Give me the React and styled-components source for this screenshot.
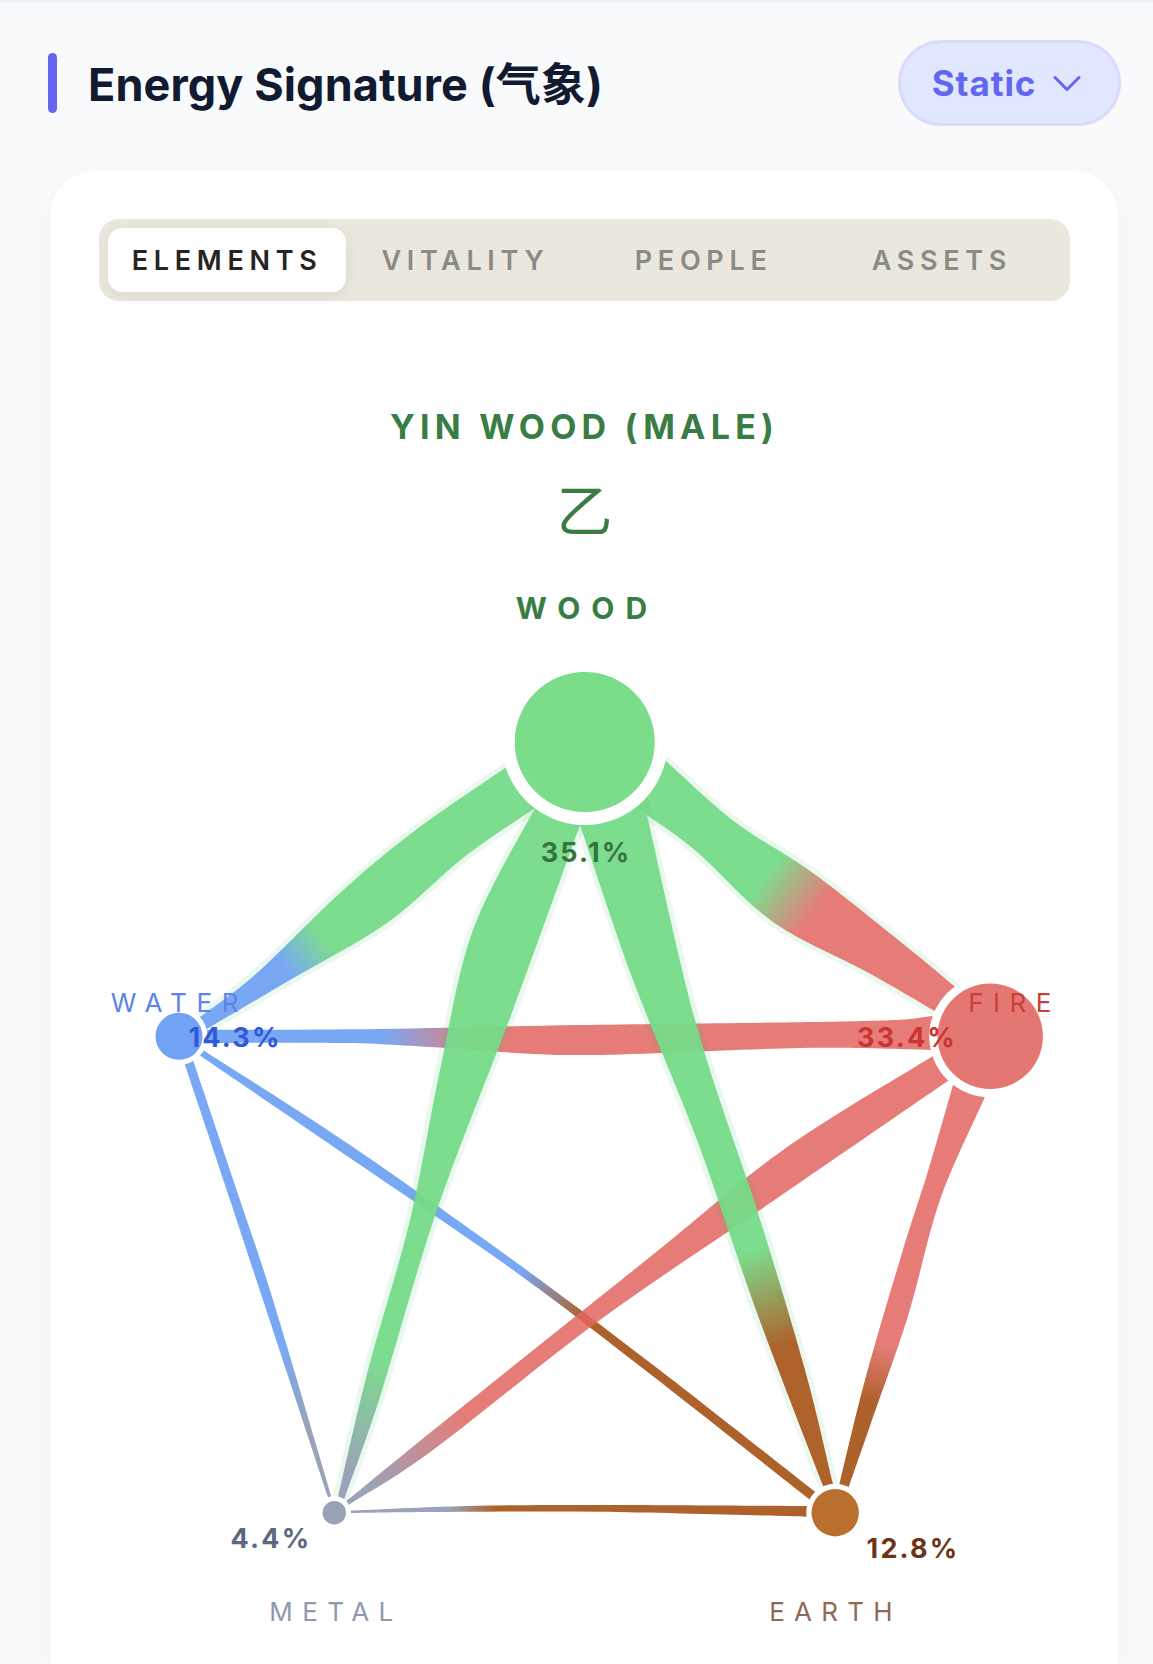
import React from "react";
import styled, { createGlobalStyle } from "styled-components";

const GlobalStyle = createGlobalStyle`
  html, body {
    margin: 0;
    height: 100%;
    overflow: hidden;
    background: #f8fafc;
    font-family: Inter, "Noto Sans CJK SC", sans-serif;
  }
`;

const TABS = ["ELEMENTS", "VITALITY", "PEOPLE", "ASSETS"];

const COLORS = {
  wood: "#66d77a",
  fire: "#e26560",
  water: "#6099f2",
  earth: "#9f4605",
  metal: "#8893ac",
};

// the wood ribbons are nearly opaque, so they need their own mix to look the same
const HALO_COLORS = {
  wood: "#76db88",
  fire: "#e57571",
  water: "#71a3f3",
  earth: "#a95a20",
  metal: "#959eb4",
};

const NODES = [
  { id: "wood", x: 584.7, y: 742, r: 70, ring: 83, fill: "#7bdc8a" },
  { id: "fire", x: 990.2, y: 1036.3, r: 52.7, ring: 61, fill: "#e57773" },
  { id: "water", x: 179, y: 1036.3, r: 23.5, ring: 28.5, fill: "#72a2f4" },
  { id: "metal", x: 334.3, y: 1512.7, r: 11.7, ring: 16.7, fill: "#99a3b8" },
  { id: "earth", x: 835.2, y: 1512.7, r: 23.7, ring: 29, fill: "#b9702f" },
];

const nodeById = (id) => NODES.find((n) => n.id === id);

// paint order matters, wood goes last because it lies over the other ribbons
const RIBBONS = [
  {
    from: "metal", to: "earth", stops: [0.23, 0.32],
    top: [[350, 1510.7], [466.7, 1506], [600, 1505], [806.7, 1506]],
    bottom: [[350, 1513], [433, 1512], [600, 1511.7], [806.7, 1516.7]],
  },
  {
    from: "water", to: "earth", stops: [0.51, 0.607],
    top: [[205.7, 1051.7], [350, 1145], [517, 1263], [657, 1368], [815, 1491.7]],
    bottom: [[201.7, 1056.7], [350, 1158], [513, 1270], [645, 1370], [809, 1499]],
  },
  {
    from: "water", to: "metal", stops: [0.64, 0.825],
    top: [[194, 1063], [240, 1200], [273, 1300], [331.7, 1497]],
    bottom: [[185, 1065], [230, 1200], [263, 1300], [328, 1497]],
  },
  {
    from: "water", to: "fire", stops: [0.25, 0.367],
    top: [[200, 1030], [380, 1029], [580, 1025], [867, 1021], [932, 1016]],
    bottom: [[200, 1043], [347, 1043], [447, 1048], [580, 1055], [800, 1048], [930, 1050]],
  },
  {
    from: "fire", to: "earth", stops: [0.65, 0.77],
    top: [[984, 1099], [940, 1200], [908, 1316], [871, 1423], [849, 1486]],
    bottom: [[955, 1078], [929, 1168], [902, 1253], [865, 1380], [839, 1486]],
  },
  {
    from: "fire", to: "metal", stops: [0.8, 0.95],
    top: [[931.7, 1056.7], [783, 1150], [650, 1257], [450, 1416.7], [347.7, 1500]],
    bottom: [[946.7, 1081.7], [760, 1210], [600, 1320], [433, 1450], [350, 1504]],
  },
  {
    from: "wood", to: "water", halo: true, stops: [0.65, 0.75],
    top: [[505, 768], [413, 832], [340, 893], [257, 973], [200, 1017]],
    bottom: [[535, 808], [463, 858], [387, 923], [290, 980], [210, 1027]],
  },
  {
    from: "wood", to: "fire", halo: true, stops: [0.45, 0.57],
    top: [[667, 762], [735, 822], [813, 873], [907, 947], [953, 985]],
    bottom: [[647, 815], [697, 852], [773, 922], [867, 972], [933, 1010]],
  },
  {
    from: "wood", to: "metal", halo: true, stops: [0.8, 0.95],
    top: [[580, 825], [513, 1010], [438, 1207], [380, 1397], [345, 1497]],
    bottom: [[535, 808], [473, 930], [440, 1070], [410, 1220], [368, 1370], [338, 1497]],
  },
  {
    from: "wood", to: "earth", halo: true, stops: [0.66, 0.785],
    top: [[647, 815], [697, 1027], [758, 1213], [805, 1370], [832.7, 1483]],
    bottom: [[580, 825], [633, 980], [697, 1140], [757, 1313], [822.7, 1485]],
  },
];

const LABELS = [
  { text: "WOOD", x: 587, y: 619, color: "#3a7d44", bold: true, spacing: 11, size: 30 },
  { text: "WATER", x: 179.5, y: 1012, color: "#5d82e9", spacing: 9.7 },
  { text: "FIRE", x: 1014.5, y: 1012, color: "#c93f3c", spacing: 9.5 },
  { text: "METAL", x: 336, y: 1621, color: "#8f99ab", spacing: 9.4 },
  { text: "EARTH", x: 835.5, y: 1621, color: "#8e6a55", spacing: 9.2 },
];

const PERCENTS = [
  { text: "35.1%", x: 586, y: 862, color: "#37723f" },
  { text: "14.3%", x: 235, y: 1047, color: "#3159d9" },
  { text: "33.4%", x: 907, y: 1047, color: "#c93532" },
  { text: "4.4%", x: 271, y: 1548, color: "#5c6880" },
  { text: "12.8%", x: 913, y: 1558, color: "#6f3312" },
];

// lengthen a traced edge so that its end disappears under the white ring
const extend = (pts) => {
  const push = ([ax, ay], [bx, by]) => {
    const len = Math.hypot(ax - bx, ay - by);
    return [ax + ((ax - bx) / len) * 20, ay + ((ay - by) / len) * 20];
  };
  return [push(pts[0], pts[1]), ...pts, push(pts[pts.length - 1], pts[pts.length - 2])];
};

// catmull-rom through the points, written out as cubic segments
const smooth = (pts) => {
  let d = "";
  for (let i = 0; i < pts.length - 1; i++) {
    const p0 = pts[i - 1] || pts[i];
    const p1 = pts[i];
    const p2 = pts[i + 1];
    const p3 = pts[i + 2] || p2;
    const c1 = [p1[0] + (p2[0] - p0[0]) / 6, p1[1] + (p2[1] - p0[1]) / 6];
    const c2 = [p2[0] - (p3[0] - p1[0]) / 6, p2[1] - (p3[1] - p1[1]) / 6];
    d += ` C${c1[0]} ${c1[1]} ${c2[0]} ${c2[1]} ${p2[0]} ${p2[1]}`;
  }
  return d;
};

const ribbonPath = ({ top, bottom }) => {
  const a = extend(top);
  const b = extend(bottom).reverse();
  return `M${a[0][0]} ${a[0][1]}${smooth(a)} L${b[0][0]} ${b[0][1]}${smooth(b)} Z`;
};

const Page = styled.div`
  border-top: 3px solid #f2f4fc;
  padding: 37px 32px 0 48px;
  height: 100vh;
  box-sizing: border-box;
  overflow: hidden;
`;

const Header = styled.header`
  display: flex;
  align-items: center;
  justify-content: space-between;
  height: 86px;
`;

const TitleGroup = styled.div`
  display: flex;
  align-items: center;
  gap: 31px;
`;

const AccentBar = styled.span`
  width: 9px;
  height: 60px;
  border-radius: 5px;
  background: #6366f1;
`;

const Title = styled.h2`
  margin: -4px 0 0;
  font-size: 45px;
  font-weight: 700;
  letter-spacing: 0.1px;
  color: #111a30;
`;

const ModeButton = styled.button`
  display: flex;
  align-items: center;
  justify-content: center;
  gap: 17px;
  width: 223px;
  height: 86px;
  padding: 0 6px 0 0;
  border: 3px solid #ddd9fb;
  border-radius: 43px;
  background: #e0e7ff;
  color: #6366f1;
  font: 700 35px Inter, sans-serif;
  letter-spacing: 0.9px;
`;

const Chevron = styled.svg`
  width: 28px;
  height: 17px;
  fill: none;
  stroke: currentColor;
  stroke-width: 3;
  stroke-linecap: round;
  stroke-linejoin: round;
`;

const Card = styled.section`
  margin: 45px 3px 0 3px;
  padding: 48px 48px 0;
  height: 1493px;
  box-sizing: border-box;
  border-radius: 44px 44px 0 0;
  background: #fff;
  box-shadow: 0 10px 40px rgba(15, 23, 42, 0.03);
`;

const TabBar = styled.div`
  display: grid;
  grid-template-columns: repeat(4, 1fr);
  padding: 9px;
  height: 82px;
  box-sizing: border-box;
  border-radius: 20px;
  background: #eae7df;
`;

const Tab = styled.div`
  display: flex;
  align-items: center;
  justify-content: center;
  border-radius: 14px;
  font-size: 27px;
  font-weight: 600;
  letter-spacing: 5.7px;
  color: ${(p) => (p.$active ? "#27241f" : "#8b8b85")};
  background: ${(p) => (p.$active ? "#fff" : "transparent")};
  box-shadow: ${(p) => (p.$active ? "0 4px 14px rgba(60, 50, 30, 0.08)" : "none")};
`;

const Heading = styled.div`
  margin-top: 104px;
  text-align: center;
  font-size: 34px;
  line-height: 44px;
  font-weight: 700;
  letter-spacing: 5.2px;
  color: #3a7d44;
`;

const Glyph = styled.div`
  margin-top: 23px;
  text-align: center;
  font-family: "Noto Sans CJK SC", sans-serif;
  font-size: 56px;
  line-height: 70px;
  font-weight: 400;
  color: #3a7d44;
`;

const Chart = styled.svg`
  display: block;
  width: 1068px;
  height: 1094px;
  margin: 28px -48px 0;
`;

const Ribbon = styled.path`
  fill-opacity: ${(p) => (p.$halo ? 0.95 : 0.85)};
  paint-order: stroke;
  stroke: ${(p) => (p.$halo ? "rgba(55, 185, 105, 0.1)" : "none")};
  stroke-width: 9.5;
  stroke-linejoin: round;
`;

const NodeLabel = styled.text`
  font-family: Inter, sans-serif;
  font-size: ${(p) => p.$size || 26}px;
  font-weight: ${(p) => (p.$bold ? 700 : 400)};
  letter-spacing: ${(p) => p.$spacing}px;
  text-anchor: middle;
  fill: ${(p) => p.$color};
`;

const Percent = styled.text`
  font-family: Inter, sans-serif;
  font-size: 27px;
  font-weight: 700;
  letter-spacing: 2.2px;
  text-anchor: middle;
  fill: ${(p) => p.$color};
`;

const EnergyChart = () => (
  <Chart viewBox="51 570 1068 1094">
    <defs>
      {RIBBONS.map((r, i) => {
        const a = nodeById(r.from);
        const b = nodeById(r.to);
        const palette = r.halo ? HALO_COLORS : COLORS;
        return (
          <linearGradient key={i} id={`ribbon-${i}`} gradientUnits="userSpaceOnUse" x1={a.x} y1={a.y} x2={b.x} y2={b.y}>
            <stop offset={r.stops[0]} stopColor={palette[r.from]} />
            <stop offset={r.stops[1]} stopColor={palette[r.to]} />
          </linearGradient>
        );
      })}
    </defs>
    {RIBBONS.map((r, i) => (
      <Ribbon key={i} d={ribbonPath(r)} fill={`url(#ribbon-${i})`} $halo={r.halo} />
    ))}
    {NODES.map((n) => (
      <g key={n.id}>
        <circle cx={n.x} cy={n.y} r={n.ring} fill="#fff" />
        <circle cx={n.x} cy={n.y} r={n.r} fill={n.fill} />
      </g>
    ))}
    {LABELS.map((l) => (
      <NodeLabel key={l.text} x={l.x} y={l.y} $color={l.color} $bold={l.bold} $spacing={l.spacing} $size={l.size}>
        {l.text}
      </NodeLabel>
    ))}
    {PERCENTS.map((p) => (
      <Percent key={p.text} x={p.x} y={p.y} $color={p.color}>
        {p.text}
      </Percent>
    ))}
  </Chart>
);

export default function App() {
  return (
    <Page>
      <GlobalStyle />
      <Header>
        <TitleGroup>
          <AccentBar />
          <Title>Energy Signature (气象)</Title>
        </TitleGroup>
        <ModeButton>
          Static
          <Chevron viewBox="0 0 28 17">
            <path d="M2 2.5 L14 14.5 L26 2.5" />
          </Chevron>
        </ModeButton>
      </Header>
      <Card>
        <TabBar>
          {TABS.map((t, i) => (
            <Tab key={t} $active={i === 0}>
              {t}
            </Tab>
          ))}
        </TabBar>
        <Heading>YIN WOOD (MALE)</Heading>
        <Glyph>乙</Glyph>
        <EnergyChart />
      </Card>
    </Page>
  );
}
